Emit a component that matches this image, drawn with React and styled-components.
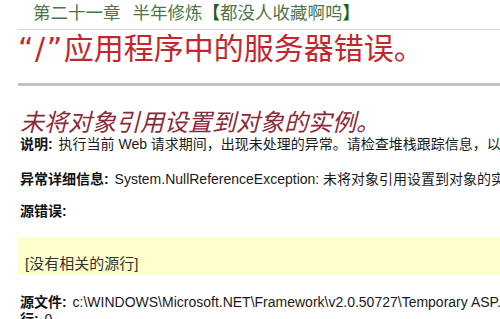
import React from 'react'
import styled, { createGlobalStyle } from 'styled-components'

const GlobalStyle = createGlobalStyle`
    html, body {
        margin: 0;
        padding: 0;
        background-color: #fff;
        overflow: hidden;
    }
`;

const Page = styled.div`
    width: 500px;
    height: 319px;
    overflow: hidden;
    padding-left: 18px;
    box-sizing: border-box;
    white-space: nowrap;
    font-family: "Liberation Sans", "Noto Sans CJK SC", sans-serif;
    color: #1a1a1a;
`;

const SiteTitle = styled.div`
    height: 30px;
    line-height: 23px;
    padding-left: 15px;
    font-size: 17.5px;
    font-family: "Noto Sans CJK SC", sans-serif;
    color: #4a774a;
    border-bottom: 1px solid #d4d4d4;
    box-sizing: border-box;
`;

const Gap = styled.span`
    display: inline-block;
    width: 12px;
`;

const Bracket = styled.span`
    color: #1d5e1d;
    font-weight: bold;
`;

const ErrorTitle = styled.h1`
    margin: 0;
    height: 38px;
    line-height: 38px;
    font-size: 30px;
    font-weight: normal;
    font-family: "DejaVu Sans", "Noto Sans CJK SC", sans-serif;
    color: #c4262d;
`;

const Quote = styled.span`
    letter-spacing: 1.5px;
`;

const Rule = styled.div`
    margin-top: 15px;
    height: 3px;
    background-color: #c3c3c3;
`;

const Message = styled.h2`
    margin: 21px 0 0 2px;
    height: 28px;
    line-height: 28px;
    font-size: 24px;
    font-weight: normal;
    font-style: italic;
    font-family: "Noto Sans CJK SC", sans-serif;
    color: #8a2a3a;
`;

const Line = styled.div`
    margin-top: ${p => p.$gap || 0}px;
    margin-left: 2px;
    height: ${p => p.$h || 18}px;
    line-height: ${p => p.$h || 18}px;
    font-size: 14px;
`;

const Label = styled.b`
    color: #111;
    margin-right: 2px;
`;

const SourceBox = styled.div`
    margin-top: 17px;
    height: 38px;
    padding: 18px 0 0 7px;
    box-sizing: border-box;
    background-color: #ffffcc;
    font-size: 15px;
    line-height: 18px;
    color: #333;
`;

const App = () => {
    return (
        <>
            <GlobalStyle />
            <Page>
                <SiteTitle>
                    第二十一章<Gap />半年修炼<Bracket>【</Bracket>都没人收藏啊呜<Bracket>】</Bracket>
                </SiteTitle>

                <ErrorTitle><Quote>“/”</Quote>应用程序中的服务器错误。</ErrorTitle>
                <Rule />

                <Message>未将对象引用设置到对象的实例。</Message>

                <Line>
                    <Label>说明:</Label> 执行当前 Web 请求期间，出现未处理的异常。请检查堆栈跟踪信息，以了解有关该错误以及代码中导致错误的出处的详细信息。
                </Line>
                <Line $gap={17}>
                    <Label>异常详细信息:</Label> System.NullReferenceException: 未将对象引用设置到对象的实例。
                </Line>
                <Line $gap={14}>
                    <Label>源错误:</Label>
                </Line>

                <SourceBox>[没有相关的源行]</SourceBox>

                <Line $gap={18}>
                    <Label>源文件:</Label> c:\WINDOWS\Microsoft.NET\Framework\v2.0.50727\Temporary ASP.NET Files\root\a3e5d2c1\default.aspx
                </Line>
                <Line $h={16}>
                    <Label>行:</Label> 0
                </Line>
            </Page>
        </>
    )
}

export default App
